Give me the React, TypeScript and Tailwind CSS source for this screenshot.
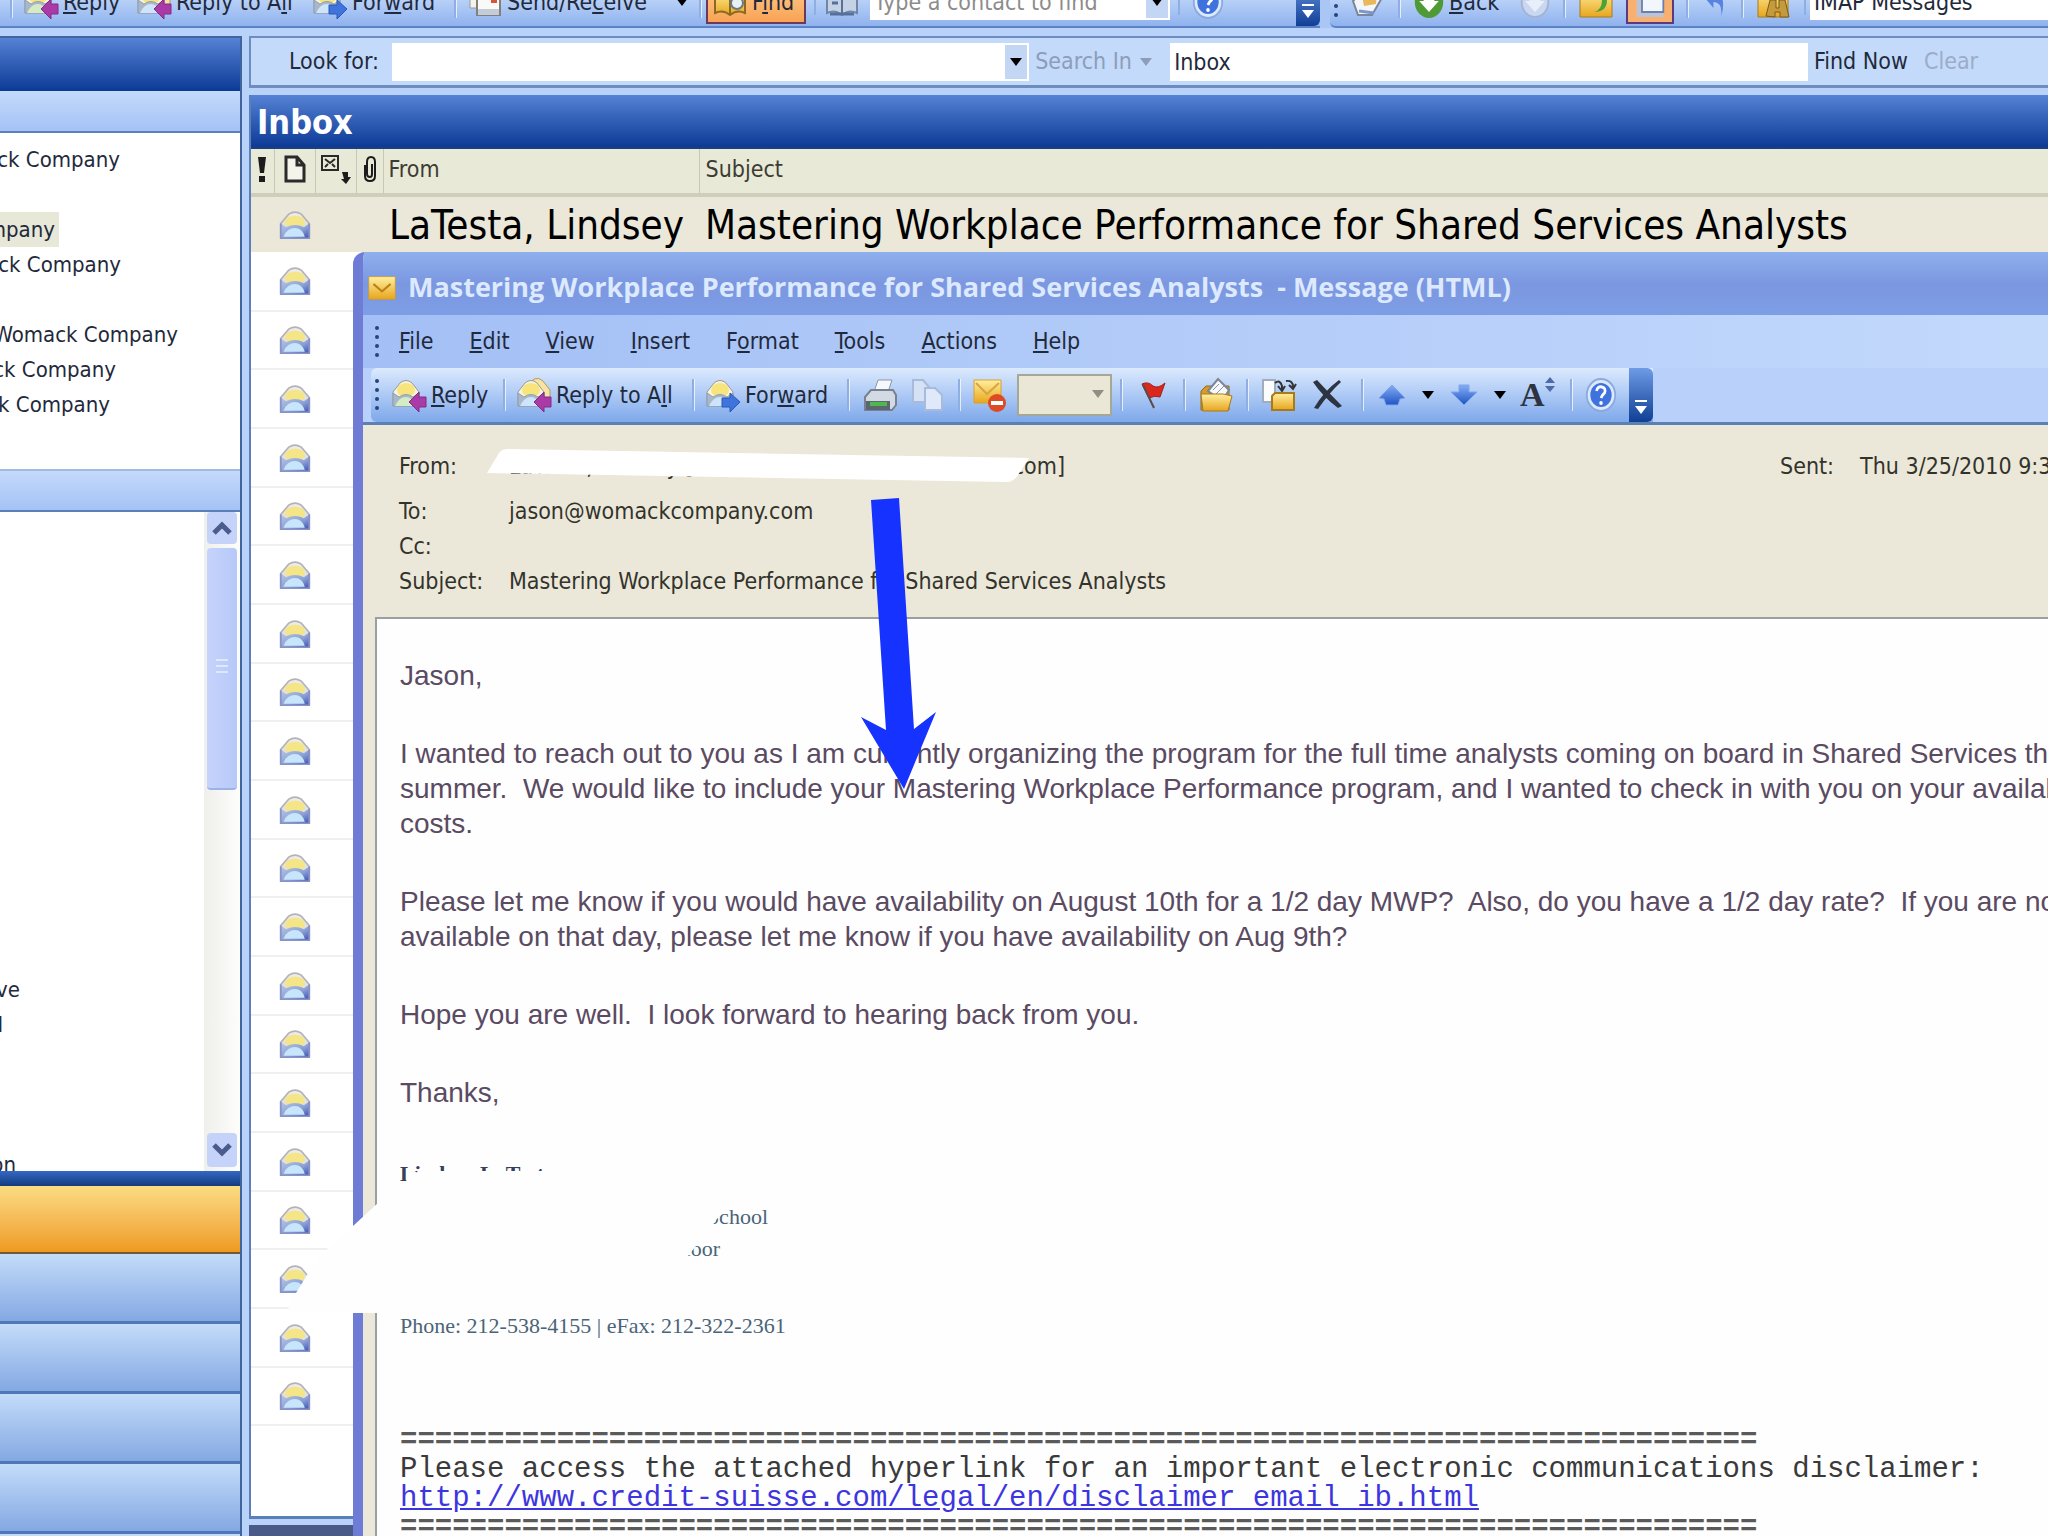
import type { ReactNode } from 'react';

const folders = [
  { text: 'ck Company', width: 'w-[120px]' },
  { text: '', width: 'w-[120px]' },
  { text: 'mpany', width: 'w-[59px]', selected: true },
  { text: 'ck Company', width: 'w-[121px]' },
  { text: '', width: 'w-[120px]' },
  { text: 'Womack Company', width: 'w-[178px]' },
  { text: 'ck Company', width: 'w-[116px]' },
  { text: 'k Company', width: 'w-[110px]' },
];

const menu = [
  ['', 'F', 'ile'],
  ['', 'E', 'dit'],
  ['', 'V', 'iew'],
  ['', 'I', 'nsert'],
  ['F', 'o', 'rmat'],
  ['', 'T', 'ools'],
  ['', 'A', 'ctions'],
  ['', 'H', 'elp'],
];

const Defs = () => (
  <svg width="0" height="0" className="absolute" aria-hidden="true">
    <defs>
      <linearGradient id="flap" x1="0" y1="0" x2="0" y2="1">
        <stop offset="0" stopColor="#f0eee6" />
        <stop offset="1" stopColor="#d9d3c0" />
      </linearGradient>
      <linearGradient id="pocket" x1="0" y1="0" x2="1" y2="1">
        <stop offset="0" stopColor="#b4c6e6" />
        <stop offset="0.6" stopColor="#8a9fd4" />
        <stop offset="1" stopColor="#3d4fb4" />
      </linearGradient>
      <linearGradient id="gold" x1="0" y1="0" x2="0" y2="1">
        <stop offset="0" stopColor="#fff0a0" />
        <stop offset="1" stopColor="#e8a51c" />
      </linearGradient>
      <linearGradient id="blue" x1="0" y1="0" x2="0" y2="1">
        <stop offset="0" stopColor="#84adf5" />
        <stop offset="1" stopColor="#1f55c4" />
      </linearGradient>
    </defs>
  </svg>
);

const Icon = ({ children, className = 'w-9 h-9' }: { children: ReactNode; className?: string }) => (
  <svg viewBox="0 0 36 36" preserveAspectRatio="none" className={`shrink-0 ${className}`} aria-hidden="true">
    {children}
  </svg>
);

const OpenMail = () => (
  <Icon className="w-8 h-7 mx-auto">
    <path d="M2 16 L11 4 Q18 -1 25 4 L34 16 V34 H2 Z" fill="url(#flap)" stroke="#b4b2bc" strokeWidth="2" />
    <ellipse cx="18" cy="14" rx="11" ry="8" fill="#f4e686" />
    <path d="M2 16 L8 21 Q18 15 28 21 L34 16 V35 H2 Z" fill="url(#pocket)" />
    <path d="M5 33 Q9 22 18 22 Q26 22 29 33 Z" fill="#c7e6fc" />
    <path d="M2 16 V35 H34 V16" fill="none" stroke="#8794c8" strokeWidth="2" />
  </Icon>
);

const MailArrow = ({ kind }: { kind: 'reply' | 'all' | 'forward' }) => (
  <Icon>
    {kind === 'all' && <path d="M10 10 L18 2 Q23 0 27 4 L34 13 V24 H12 Z" fill="#f8e3a0" stroke="#b09a68" />}
    <path d="M2 15 L9 6 Q15 1 21 6 L28 15 V29 H2 Z" fill="#f8f4dc" stroke="#9a9a9a" />
    <ellipse cx="15" cy="13" rx="9" ry="7" fill="#f7e47c" />
    <path d="M2 16 L8 20 Q15 15 22 20 L28 16 V29 H2 Z" fill="#a9b8c8" stroke="#8fa0b4" />
    <path d="M4 29 Q8 20 15 20 Q21 20 25 29 Z" fill={kind === 'reply' ? '#d3ecc4' : '#cde4fa'} />
    {kind === 'forward' ? (
      <path d="M17 21 H25 V16 L35 25 L25 35 V30 H17 Z" fill="#3f74dd" stroke="#2b58b8" />
    ) : (
      <path d="M35 20 H28 V15 L18 25 L28 35 V30 H35 Z" fill="#a93aa6" stroke="#842a8a" />
    )}
  </Icon>
);

const SendReceiveIcon = () => (
  <Icon>
    <path d="M3 4 H26 V24 H3 Z" fill="#f3f3ee" stroke="#9a9a94" />
    <path d="M10 9 H33 V31 H10 Z" fill="#f9f9f6" stroke="#81817c" strokeWidth="2" />
    <path d="M24 13 H30 V19 H24 Z" fill="#d9533d" />
    <path d="M11 25 H32 V31 H11 Z" fill="#c5ccd9" />
  </Icon>
);

const BookIcon = ({ grey }: { grey?: boolean }) => (
  <Icon>
    <path
      d="M3 8 Q11 4 18 10 Q25 4 33 8 V29 Q25 25 18 31 Q11 25 3 29 Z"
      fill={grey ? '#c4d2e4' : 'url(#gold)'}
      stroke={grey ? '#6f86a8' : '#8a6a22'}
      strokeWidth="2"
    />
    <path d="M18 10 V30" stroke={grey ? '#5a7196' : '#8a6a22'} strokeWidth="2" />
    {grey ? (
      <path d="M8 13 H14 M8 19 H14 M22 13 H29 M6 30 H30" stroke="#55709a" strokeWidth="3" />
    ) : (
      <circle cx="25" cy="19" r="6" fill="#e8f1f6" stroke="#6d7a80" strokeWidth="2" />
    )}
  </Icon>
);

const HelpIcon = () => (
  <Icon className="w-8 h-9">
    <ellipse cx="18" cy="18" rx="16" ry="16" fill="#dce9fb" stroke="#8aa9e0" strokeWidth="2" />
    <circle cx="18" cy="18" r="12" fill="#3f72dc" />
    <path d="M13 14 Q14 9 19 10 Q24 11 22 16 Q19 18 18 21" fill="none" stroke="#fff" strokeWidth="3" />
    <circle cx="18" cy="26" r="2" fill="#fff" />
  </Icon>
);

const PrinterIcon = () => (
  <Icon>
    <path d="M12 15 L16 3 H30 L26 15 Z" fill="#f5f8fc" stroke="#8b97a8" />
    <path d="M3 20 L9 13 H31 L34 18 V28 L30 33 H3 Z" fill="#d4dae4" stroke="#77818f" strokeWidth="2" />
    <path d="M4 24 H28 V33 H4 Z" fill="#5b6672" />
    <path d="M8 25 H25 V29 H8 Z" fill="#4db84b" />
  </Icon>
);

const CopyIcon = () => (
  <Icon>
    <path d="M3 3 H13 L19 10 V25 H3 Z" fill="#d5e2f6" stroke="#a8bbdc" strokeWidth="2" />
    <path d="M15 11 H25 L32 18 V33 H15 Z" fill="#dfe9f9" stroke="#a8bbdc" strokeWidth="2" />
  </Icon>
);

const BlockIcon = () => (
  <Icon>
    <path d="M3 3 H30 V26 H3 Z" fill="url(#gold)" stroke="#d8a030" />
    <path d="M5 6 L16 17 L28 6" fill="none" stroke="#d8a640" strokeWidth="2" />
    <circle cx="26" cy="26" r="9" fill="#dd4a25" />
    <path d="M20 24 H32 V28 H20 Z" fill="#fff" />
  </Icon>
);

const FlagIcon = () => (
  <Icon>
    <path d="M7 7 Q13 4 18 9 Q23 12 30 6 L25 20 Q20 18 14 21 Z" fill="#d9281c" stroke="#a61d15" />
    <path d="M8 8 L19 31" stroke="#5c4a4a" strokeWidth="2" />
  </Icon>
);

const FolderIcon = () => (
  <Icon>
    <path d="M3 14 L8 9 H31 V33 H3 Z" fill="#d99b25" stroke="#8e6a22" />
    <path d="M10 14 L20 2 L31 13 L24 24 Z" fill="#f6f8fb" stroke="#7d8696" strokeWidth="2" />
    <path d="M15 13 L21 7 M18 17 L26 9" stroke="#8b94a4" />
    <path d="M3 17 H25 L34 19 L30 34 H5 Z" fill="url(#gold)" stroke="#a87a1c" />
  </Icon>
);

const MoveIcon = () => (
  <Icon>
    <path d="M2 3 H14 V25 H2 Z" fill="#fbfcfe" stroke="#a2acbc" strokeWidth="2" />
    <path d="M14 6 Q19 2 21 9 V13 M17 9 L21 14 L24 9" fill="none" stroke="#333" strokeWidth="2" />
    <path d="M25 4 Q32 3 32 10 M28 8 L32 12 L35 7" fill="none" stroke="#333" strokeWidth="2" />
    <path d="M11 19 L14 16 H33 V33 H11 Z" fill="url(#gold)" stroke="#a87a1c" strokeWidth="2" />
  </Icon>
);

const DeleteIcon = () => (
  <Icon>
    <path d="M4 5 L8 3 Q20 16 33 29 L29 31 Q14 20 4 5 Z M30 3 L32 5 Q20 16 9 32 L5 31 Q15 14 30 3 Z" fill="#2d3340" />
  </Icon>
);

const UpDown = ({ down }: { down?: boolean }) => (
  <Icon>
    <path
      d={down ? 'M13 8 L23 8 L23 15 L31 15 L18 28 L5 15 L13 15 Z' : 'M18 8 L31 21 L26 22 L24 28 L12 28 L10 22 L5 21 Z'}
      fill="url(#blue)"
      stroke="#7ea4ec"
    />
  </Icon>
);

const FontIcon = () => (
  <span className="flex w-9 font-[Liberation_Serif,serif] text-[34px] leading-9 font-bold text-[#2d3340]">
    A
    <svg viewBox="0 0 10 16" className="h-4 w-2.5 shrink-0" aria-hidden="true">
      <path d="M5 0 L10 6 H0 Z M0 9 H10 L5 15 Z" fill="#4c6ba8" />
    </svg>
  </span>
);

const Caret = ({ className = 'text-black' }: { className?: string }) => (
  <svg viewBox="0 0 12 8" className={`w-3 h-2 shrink-0 ${className}`} aria-hidden="true">
    <path d="M0 0 H12 L6 8 Z" fill="currentColor" />
  </svg>
);

const Sep = () => <span className="w-[3px] h-8 shrink-0 border-l-2 border-[#8fafe2] bg-white/70" />;

const Dots = () => (
  <svg viewBox="0 0 4 32" className="w-1 h-8 shrink-0" aria-hidden="true">
    {[2, 11, 20, 29].map((y) => (
      <circle key={y} cx="2" cy={y} r="2" fill="#27437c" />
    ))}
  </svg>
);

const EndCap = () => (
  <span className="flex w-6 shrink-0 self-stretch flex-col items-center justify-end gap-1 rounded-r-md bg-linear-to-b from-[#6f9be6] to-[#0f3f95] pb-2 text-white">
    <span className="h-[2px] w-3 bg-white" />
    <Caret className="text-white" />
  </span>
);

const TopBar = () => (
  <header className="flex h-[28px] items-end gap-[10px] overflow-hidden bg-[#a9c6f5]">
    <div className="flex h-[50px] w-[1320px] shrink-0 items-center border-b-2 border-[#5c82c6] bg-linear-to-b from-[#dbeafe] to-[#8fb2ee] pl-[10px]">
      <Sep />
      <button className="flex w-[123px] items-center gap-1 pl-[10px]">
        <MailArrow kind="reply" />
        <span><u>R</u>eply</span>
      </button>
      <button className="flex w-[166px] items-center gap-1 whitespace-nowrap">
        <MailArrow kind="all" />
        <span>Reply to A<u>l</u>l</span>
      </button>
      <button className="flex w-[152px] items-center gap-1 pl-[10px]">
        <MailArrow kind="forward" />
        <span>For<u>w</u>ard</span>
      </button>
      <Sep />
      <button className="flex w-[242px] items-center gap-1 whitespace-nowrap pl-[10px]">
        <SendReceiveIcon />
        <span className="w-[165px] text-left">Send/Re<u>c</u>eive</span>
        <Caret />
      </button>
      <Sep />
      <button className="ml-1 flex h-[44px] w-[100px] shrink-0 items-center gap-1 border-2 border-[#6a3a5c] bg-linear-to-b from-[#ffcf8e] to-[#f8a254] pl-1">
        <BookIcon />
        <span>F<u>i</u>nd</span>
      </button>
      <span className="ml-2"><Sep /></span>
      <button className="w-[54px] pl-2" aria-label="Address Book">
        <BookIcon grey />
      </button>
      <input
        aria-label="Type a contact to find"
        placeholder="Type a contact to find"
        className="h-[36px] min-w-0 flex-1 bg-white px-1 placeholder:text-[#8c8c8c]"
      />
      <button className="flex h-[36px] w-[26px] items-center justify-center border-2 border-white bg-[#c3d7f5]" aria-label="Contacts">
        <Caret />
      </button>
      <span className="ml-2"><Sep /></span>
      <button className="w-[116px] pl-3" aria-label="Help">
        <HelpIcon />
      </button>
      <EndCap />
    </div>
    <div className="flex h-[50px] min-w-0 flex-1 items-center gap-3 rounded-l-md border-b-2 border-[#5c82c6] bg-linear-to-b from-[#dbeafe] to-[#8fb2ee] pl-1">
      <Dots />
      <button aria-label="Outlook Today">
        <Icon>
          <path d="M3 17 L16 4 L33 12 L22 31 L8 31 Z" fill="#f4f6fa" stroke="#7c8698" strokeWidth="2" />
          <path d="M12 12 L27 8 L26 20 L14 22 Z" fill="#e9b85a" />
          <path d="M9 27 L24 29" stroke="#7896d0" strokeWidth="3" />
        </Icon>
      </button>
      <Sep />
      <button className="flex w-[94px] items-center gap-1">
        <Icon className="w-8 h-9">
          <circle cx="18" cy="18" r="16" fill="#4f9a37" />
          <path d="M12 8 H24 V17 H29 L18 28 L7 17 H12 Z" fill="#fff" />
        </Icon>
        <span><u>B</u>ack</span>
      </button>
      <button aria-label="Forward">
        <Icon className="w-8 h-9">
          <circle cx="18" cy="18" r="15" fill="#c9d8f0" stroke="#a3b3d0" strokeWidth="2" />
          <path d="M12 8 H24 V17 H29 L18 28 L7 17 H12 Z" fill="#e9effa" />
        </Icon>
      </button>
      <Sep />
      <button aria-label="Up One Level">
        <Icon>
          <path d="M2 6 H14 L17 10 H34 V33 H2 Z" fill="url(#gold)" stroke="#a87a1c" />
          <path d="M16 28 Q24 26 24 16 H19 L27 6 L34 16 H29 Q29 28 16 28" fill="#4aa332" />
        </Icon>
      </button>
      <button className="flex h-[44px] w-12 items-center justify-center border-2 border-[#5b3a80] bg-[#f8b070]" aria-label="Reading Pane">
        <Icon className="w-8 h-9">
          <path d="M3 3 H33 V33 H3 Z" fill="#bcc3d6" />
          <path d="M9 3 H33 V28 H9 Z" fill="#f2f7fe" stroke="#6a7fb0" strokeWidth="2" />
        </Icon>
      </button>
      <Sep />
      <button aria-label="Undo">
        <Icon className="w-7 h-9">
          <path d="M3 12 H16 V6 Q34 10 26 33 Q28 18 16 18 V24 Z" fill="#5a82e0" />
        </Icon>
      </button>
      <Sep />
      <button aria-label="Find People">
        <Icon>
          <path d="M2 4 H32 V33 H2 Z" fill="url(#gold)" stroke="#a87a1c" />
          <path d="M10 32 L14 16 H20 V24 H23 V16 H29 L33 33 H24 V28 H19 V33 Z" fill="#c39a3c" stroke="#7a5a1c" />
        </Icon>
      </button>
      <span className="-mr-2"><Sep /></span>
      <input aria-label="View" defaultValue="IMAP Messages" className="h-[36px] min-w-0 flex-1 bg-white px-1" />
    </div>
  </header>
);

const FolderPane = () => (
  <aside className="flex w-[242px] shrink-0 flex-col border-r-2 border-t-2 border-[#41669f] bg-white text-[22px]">
    <div className="h-[53px] shrink-0 bg-linear-to-b from-[#5582d4] to-[#0b3a96]" />
    <div className="h-[42px] shrink-0 border-b-2 border-[#5b7fb8] bg-linear-to-b from-[#c3dafa] to-[#a5c2f6]" />
    <ul className="h-[336px] shrink-0 pt-[9px] leading-[35px]">
      {folders.map((f, i) => (
        <li key={i} className={`flex h-[35px] justify-end whitespace-nowrap ${f.width}`}>
          {f.selected ? <span className="bg-[#e8e8d8] pr-1">{f.text}</span> : f.text}
        </li>
      ))}
    </ul>
    <div className="h-[43px] shrink-0 border-y-2 border-b-[#5b7fb8] border-t-[#9fbbe0] bg-linear-to-b from-[#c3dafa] to-[#a5c2f6]" />
    <div className="flex h-[659px] shrink-0">
      <ul className="flex flex-1 flex-col justify-end overflow-hidden leading-[35px]">
        <li className="flex h-[35px] w-5 justify-end">ve</li>
        <li className="flex h-[35px] w-[3px] justify-end">d</li>
        <li className="h-[105px]" />
        <li className="flex h-[24px] w-4 justify-end">on</li>
      </ul>
      <div className="flex w-9 flex-col bg-linear-to-r from-[#efefec] to-[#fdfdfb] px-[3px]">
        <button className="flex h-8 items-center justify-center rounded-sm bg-[#c5d3fb]" aria-label="Scroll up">
          <svg viewBox="0 0 20 14" className="h-3.5 w-5"><path d="M2 12 L10 4 L18 12" fill="none" stroke="#4a5c8c" strokeWidth="5" /></svg>
        </button>
        <div className="mt-1 flex h-[242px] items-center justify-center rounded-sm border-b-2 border-[#9db2e4] bg-linear-to-r from-[#c6d3fc] to-[#b6c9f8]">
          <svg viewBox="0 0 12 20" className="h-5 w-3"><path d="M0 2 H12 M0 8 H12 M0 14 H12" stroke="#dde8ff" strokeWidth="2" /></svg>
        </div>
        <div className="flex-1" />
        <button className="mb-1 flex h-[34px] items-center justify-center rounded-sm bg-[#c5d3fb]" aria-label="Scroll down">
          <svg viewBox="0 0 20 14" className="h-3.5 w-5"><path d="M2 2 L10 10 L18 2" fill="none" stroke="#4a5c8c" strokeWidth="5" /></svg>
        </button>
      </div>
    </div>
    <div className="h-[15px] shrink-0 bg-linear-to-b from-[#3567c4] to-[#123c80]" />
    <button className="h-[68px] shrink-0 border-b-2 border-[#6f5a3c] bg-linear-to-b from-[#fbdc82] to-[#ee9a1c]" aria-label="Mail" />
    {['Calendar', 'Contacts', 'Tasks', 'Notes', 'Shortcuts'].map((name) => (
      <button
        key={name}
        aria-label={name}
        className="h-[70px] shrink-0 border-b-[3px] border-[#4f78b8] bg-linear-to-b from-[#c3dcf9] to-[#84a8e2]"
      />
    ))}
  </aside>
);

const SearchBar = () => (
  <form className="flex h-[52px] shrink-0 items-center border-b-[3px] border-l-2 border-t-2 border-[#6d8cc0] bg-[#c3dafa]">
    <label htmlFor="look" className="w-[141px] whitespace-nowrap pl-[38px]">Look for:</label>
    <input id="look" className="h-[38px] min-w-0 flex-[610] bg-white px-1" />
    <button type="button" className="flex h-[38px] w-[26px] items-center justify-center border-2 border-white bg-[#c3d7f5]" aria-label="Recent searches">
      <Caret />
    </button>
    <button type="button" className="flex w-[141px] items-center gap-2 whitespace-nowrap pl-[6px] text-[#8d9db8]">
      Search In <Caret className="text-[#8d9db8]" />
    </button>
    <input aria-label="Search In" defaultValue="Inbox" className="h-[38px] min-w-0 flex-[637] bg-white px-1" />
    <button type="button" className="w-[112px] whitespace-nowrap pl-[6px] text-left">Find Now</button>
    <button type="button" className="w-[128px] pl-1 text-left text-[#9dacc6]">Clear</button>
  </form>
);

const MailList = () => (
  <table className="w-full table-fixed border-collapse text-left">
    <thead>
      <tr className="h-[46px] border-b-4 border-[#cfcdbb] bg-[#e8e9d6] text-[#3c3c34] *:pb-1">
        <th className="w-[23px] border-r border-[#c9c7b6]" aria-label="Importance">
          <svg viewBox="0 0 12 28" className="mx-auto h-7 w-3"><path d="M2 2 H10 L8 18 H4 Z M3 21 H9 V27 H3 Z" fill="#1c1c1c" /></svg>
        </th>
        <th className="w-[41px] border-r border-[#c9c7b6]" aria-label="Icon">
          <svg viewBox="0 0 22 28" className="mx-auto h-7 w-[22px]"><path d="M2 2 H13 L20 10 V26 H2 Z M13 2 V10 H20" fill="#f4f4ea" stroke="#2a2a2a" strokeWidth="3" /></svg>
        </th>
        <th className="w-[41px] border-r border-[#c9c7b6]" aria-label="Flag Status">
          <svg viewBox="0 0 32 32" className="mx-auto h-8 w-8">
            <path d="M2 3 H18 V17 H2 Z M5 6 L10 10 L15 6 M5 14 L8 11 M15 14 L12 11" fill="none" stroke="#2a2a2a" strokeWidth="2" />
            <path d="M22 19 H28 V24 H31 L26 31 L21 26 H24 Z" fill="#1c1c1c" />
          </svg>
        </th>
        <th className="w-[27px] border-r border-[#c9c7b6]" aria-label="Attachment">
          <svg viewBox="0 0 16 28" className="mx-auto h-7 w-4"><path d="M3 10 V21 Q3 26 8 26 Q13 26 13 21 V7 Q13 2 9 2 Q5 2 5 7 V19 Q5 22 8 22 Q10 22 10 19 V9" fill="none" stroke="#1c1c1c" strokeWidth="2" /></svg>
        </th>
        <th className="w-[316px] border-r border-[#c9c7b6] pl-[5px] font-normal">From</th>
        <th className="pl-[6px] font-normal">Subject</th>
      </tr>
    </thead>
    <tbody>
      <tr className="h-[57px] bg-[#ebe8d9] text-[40px] leading-[50px] whitespace-nowrap text-black">
        <td />
        <td><OpenMail /></td>
        <td />
        <td />
        <td className="pl-[6px]">LaTesta, Lindsey</td>
        <td className="pl-[6px]">Mastering Workplace Performance for Shared Services Analysts</td>
      </tr>
      {Array.from({ length: 20 }, (_, i) => (
        <tr key={i} className="h-[59px] border-b-2 border-[#efefee] nth-[3n]:h-[58px]">
          <td />
          <td><OpenMail /></td>
          <td colSpan={4} />
        </tr>
      ))}
    </tbody>
  </table>
);

const MessageToolbar = () => (
  <div className="flex border-b-[3px] border-[#5b80b4] bg-[#b9d0fa]">
    <div className="ml-2 flex h-[54px] items-center rounded-l-md bg-linear-to-b from-[#dceafe] to-[#7ea8ea] pl-[4px]">
      <Dots />
      <button className="ml-3 flex w-[112px] items-center gap-1">
        <MailArrow kind="reply" />
        <span><u>R</u>eply</span>
      </button>
      <Sep />
      <button className="ml-[10px] flex w-[176px] items-center gap-1 whitespace-nowrap">
        <MailArrow kind="all" />
        <span>Reply to A<u>l</u>l</span>
      </button>
      <Sep />
      <button className="ml-[10px] flex w-[142px] items-center gap-1">
        <MailArrow kind="forward" />
        <span>For<u>w</u>ard</span>
      </button>
      <Sep />
      <button className="ml-3" aria-label="Print"><PrinterIcon /></button>
      <button className="mx-3" aria-label="Copy"><CopyIcon /></button>
      <Sep />
      <button className="mx-[10px]" aria-label="Junk"><BlockIcon /></button>
      <div className="relative mr-2 flex">
        <select aria-label="Zoom" className="h-[42px] w-[95px] appearance-none border-2 border-[#a5a797] bg-[#eae7d6]" />
        <span className="pointer-events-none absolute right-2 top-4"><Caret className="text-[#8f8f84]" /></span>
      </div>
      <Sep />
      <button className="mx-3" aria-label="Flag"><FlagIcon /></button>
      <Sep />
      <button className="mx-3" aria-label="Create Rule"><FolderIcon /></button>
      <Sep />
      <button className="mx-3" aria-label="Move to Folder"><MoveIcon /></button>
      <button className="mr-4" aria-label="Delete"><DeleteIcon /></button>
      <Sep />
      <button className="ml-[10px] flex items-center gap-3" aria-label="Previous Item"><UpDown /><Caret /></button>
      <button className="ml-3 flex items-center gap-3" aria-label="Next Item"><UpDown down /><Caret /></button>
      <button className="mx-[14px]" aria-label="Text Size"><FontIcon /></button>
      <Sep />
      <button className="mx-3" aria-label="Help"><HelpIcon /></button>
      <EndCap />
    </div>
  </div>
);

const MessageHeader = () => (
  <dl className="grid h-[192px] shrink-0 grid-cols-[110px_1fr_auto] content-start bg-[#ebe8d9] pl-[36px] pt-6 text-[#33332c] leading-[35px]">
    <dt>From:</dt>
    <dd className="flex w-[556px] justify-between">
      <span>LaTesta, Lindsey [</span>
      <span>.com]</span>
    </dd>
    <dd className="flex w-[268px] gap-[26px] overflow-hidden whitespace-nowrap">
      <span>Sent:</span>
      <span>Thu 3/25/2010 9:3</span>
    </dd>
    <dt className="mt-[10px]">To:</dt>
    <dd className="col-span-2 mt-[10px]">jason@womackcompany.com</dd>
    <dt>Cc:</dt>
    <dd className="col-span-2 h-[35px]" />
    <dt>Subject:</dt>
    <dd className="col-span-2">Mastering Workplace Performance for Shared Services Analysts</dd>
  </dl>
);

const MessageBody = () => (
  <article className="ml-3 flex-1 border-l-2 border-t-2 border-[#9aa0a0] bg-[#fefefe] pl-[23px] pt-[39px] whitespace-pre font-[Liberation_Sans,sans-serif] text-[28px] leading-[35px] text-[#5a4a62]">
    <div className="flex flex-col gap-[43px]">
      <p>Jason,</p>
      <p>
        I wanted to reach out to you as I am currently organizing the program for the full time analysts coming on board in Shared Services this<br />
        summer.  We would like to include your Mastering Workplace Performance program, and I wanted to check in with you on your availability and<br />
        costs.
      </p>
      <p>
        Please let me know if you would have availability on August 10th for a 1/2 day MWP?  Also, do you have a 1/2 day rate?  If you are not<br />
        available on that day, please let me know if you have availability on Aug 9th?
      </p>
      <p>Hope you are well.  I look forward to hearing back from you.</p>
      <p>Thanks,</p>
    </div>
    <address className="mt-[46px] font-[Liberation_Serif,serif] text-[22px] leading-[35px] text-[#4a6478] not-italic">
      <p className="font-bold text-[#33415c]">Lindsey LaTesta</p>
      <p className="mt-[10px] w-[368px] text-right leading-[32px]">School</p>
      <p className="w-[320px] text-right leading-[32px]">Floor</p>
      <p className="mt-[43px]">Phone: 212-538-4155 | eFax: 212-322-2361</p>
    </address>
    <div className="mt-[83px] font-[Liberation_Mono,monospace] text-[29px] leading-[29px] text-[#3a3a3a]">
      <p className="font-bold text-[#5a5a5a]">{'='.repeat(78)}</p>
      <p>Please access the attached hyperlink for an important electronic communications disclaimer:</p>
      <p>
        <a className="text-[#3d35e0] underline" href="http://www.credit-suisse.com/legal/en/disclaimer_email_ib.html">
          http://www.credit-suisse.com/legal/en/disclaimer_email_ib.html
        </a>
      </p>
      <p className="font-bold text-[#5a5a5a]">{'='.repeat(78)}</p>
    </div>
  </article>
);

const MessageWindow = () => (
  <section className="absolute bottom-0 left-[353px] right-0 top-[252px] flex flex-col overflow-hidden rounded-tl-xl border-l-[10px] border-[#6f7cd6] bg-[#ebe8d9]">
    <div className="flex h-[63px] shrink-0 items-center gap-3 bg-linear-to-b from-[#8fb0ee] via-[#7b97e0] to-[#7d9ee6] pl-[5px] pt-2 font-[Open_Sans,sans-serif] text-[27px] font-bold text-[#dce9ff]">
      <Icon className="w-7 h-6">
        <path d="M1 1 H35 V35 H1 Z" fill="url(#gold)" stroke="#d09a2c" />
        <path d="M7 12 L18 23 L29 12" fill="none" stroke="#b98416" strokeWidth="3" />
      </Icon>
      <h2 className="whitespace-pre">Mastering Workplace Performance for Shared Services Analysts  - Message (HTML)</h2>
    </div>
    <nav className="flex h-[53px] shrink-0 items-center bg-linear-to-r from-[#a3bff5] to-[#c3d9fc] pl-[12px]">
      <Dots />
      <div className="ml-5 flex gap-9">
        {menu.map(([a, b, c]) => (
          <button key={c}>{a}<u>{b}</u>{c}</button>
        ))}
      </div>
    </nav>
    <MessageToolbar />
    <MessageHeader />
    <MessageBody />
  </section>
);

// white-out strokes and the pointer drawn over everything else
const Markup = () => (
  <svg className="pointer-events-none absolute left-0 top-0 h-[1536px] w-[1100px]" viewBox="0 0 1100 1536" aria-hidden="true">
    <path d="M487 473 L499 453 Q502 449 508 449 L1029 458 L1018 475 Q1013 483 1005 482 Z" fill="#fff" />
    <path
      d="M402 1184 L418 1171 H700 L745 1178 L724 1209 L712 1226 L688 1256 L646 1294 L630 1313 H286 L296 1293 L307 1275 L324 1252 L353 1226 L378 1203 Z"
      fill="#fefefe"
    />
    <path d="M871 500 L899 498 L914 729 L936 712 L904 789 L861 717 L886 730 Z" fill="#1632ff" />
  </svg>
);

export default function App() {
  return (
    <div className="relative flex h-screen flex-col overflow-hidden bg-[#b8d2fa] font-[DejaVu_Sans_Condensed,DejaVu_Sans,sans-serif] text-[23px] text-[#1f2a3c] select-none">
      <Defs />
      <TopBar />
      <main className="flex min-h-0 flex-1 gap-[7px] pt-2">
        <FolderPane />
        <div className="flex min-w-0 flex-1 flex-col">
          <SearchBar />
          <section className="mt-[7px] flex h-[1424px] shrink-0 flex-col border-b-[3px] border-l-2 border-[#5b7fb8] bg-white">
            <h1 className="h-[54px] shrink-0 border-b-2 border-[#1c3f80] bg-linear-to-b from-[#5582d4] to-[#0b3a96] pl-[6px] text-[34px] leading-[54px] font-bold text-white">
              Inbox
            </h1>
            <MailList />
          </section>
          <div className="mt-[6px] flex-1 bg-[#4a5a88]" />
        </div>
      </main>
      <MessageWindow />
      <Markup />
    </div>
  );
}
